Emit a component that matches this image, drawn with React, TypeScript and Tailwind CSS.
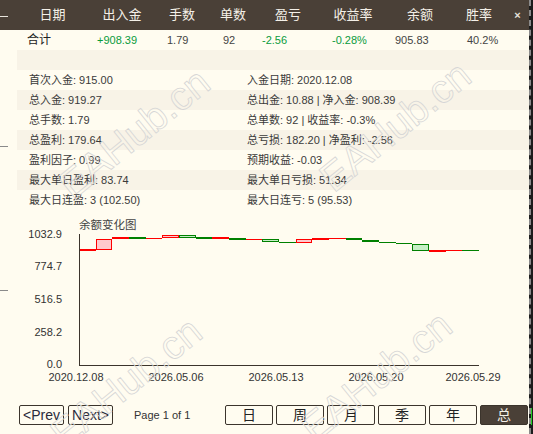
import React from 'react';

type Kind = 'upBox' | 'downBox' | 'upThick' | 'downThick' | 'upThin' | 'downThin';

interface Candle {
  k: Kind;
  y1: number;
  y2?: number;
}

// page-pixel y values, read off the balance line
const candles: Candle[] = [
  { k: 'upThick', y1: 249.7 },
  { k: 'upBox', y1: 239.3, y2: 250 },
  { k: 'upThick', y1: 237.7 },
  { k: 'downThick', y1: 237.7 },
  { k: 'upThin', y1: 238.3 },
  { k: 'upBox', y1: 235, y2: 238 },
  { k: 'downBox', y1: 235, y2: 238 },
  { k: 'downThick', y1: 237.7 },
  { k: 'upThick', y1: 237.7 },
  { k: 'downThick', y1: 239 },
  { k: 'upThin', y1: 239.3 },
  { k: 'downBox', y1: 239.3, y2: 242 },
  { k: 'downThin', y1: 242.3 },
  { k: 'upBox', y1: 239.3, y2: 243 },
  { k: 'upThick', y1: 239 },
  { k: 'upThin', y1: 238.3 },
  { k: 'downThick', y1: 239 },
  { k: 'downThick', y1: 241 },
  { k: 'downThin', y1: 242.3 },
  { k: 'downThin', y1: 243.3 },
  { k: 'downBox', y1: 244, y2: 250.5 },
  { k: 'upThick', y1: 251 },
  { k: 'upThin', y1: 250.3 },
  { k: 'downThin', y1: 250.3 },
];

const headers = ['日期', '出入金', '手数', '单数', '盈亏', '收益率', '余额', '胜率'];
const colW = ['w-[71px]', 'w-[68px]', 'w-[52px]', 'w-[50px]', 'w-[60px]', 'w-[70px]', 'w-[64px]', 'w-[54px]'];

const statRows: [string, string][] = [
  ['', ''],
  ['首次入金: 915.00', '入金日期: 2020.12.08'],
  ['总入金: 919.27', '总出金: 10.88 | 净入金: 908.39'],
  ['总手数: 1.79', '总单数: 92 | 收益率: -0.3%'],
  ['总盈利: 179.64', '总亏损: 182.20 | 净盈利: -2.56'],
  ['盈利因子: 0.99', '预期收益: -0.03'],
  ['最大单日盈利: 83.74', '最大单日亏损: 51.34'],
  ['最大日连盈: 3 (102.50)', '最大日连亏: 5 (95.53)'],
];

const yLabels = [
  { t: '1032.9', y: 238 },
  { t: '774.7', y: 270 },
  { t: '516.5', y: 303 },
  { t: '258.2', y: 336 },
  { t: '0.0', y: 368 },
];

const xLabels = [
  { t: '2020.12.08', x: 76 },
  { t: '2026.05.06', x: 176 },
  { t: '2026.05.13', x: 276 },
  { t: '2026.05.20', x: 376 },
  { t: '2026.05.29', x: 473 },
];

const periods = ['日', '周', '月', '季', '年', '总'];

const BalanceChart: React.FC = () => {
  const x0 = 79;
  const cw = 400 / 24;
  return (
    <svg width="529" height="185" viewBox="0 210 529 185" className="block shrink-0">
      <text x="79" y="229" fontSize="11.5" fill="#444">余额变化图</text>
      {yLabels.map(l => (
        <text key={l.t} x="62" y={l.y} fontSize="11" fill="#333" textAnchor="end">{l.t}</text>
      ))}
      {xLabels.map(l => (
        <text key={l.t} x={l.x} y="381" fontSize="11" fill="#333" textAnchor="middle">{l.t}</text>
      ))}
      {candles.map((c, i) => {
        const xa = Math.round(x0 + i * cw);
        const xb = Math.round(x0 + (i + 1) * cw);
        const up = c.k.startsWith('up');
        const col = up ? '#ff0000' : '#008000';
        if (c.k === 'upBox' || c.k === 'downBox') {
          const top = Math.round(c.y1);
          const bot = Math.round(c.y2 ?? c.y1);
          return (
            <rect key={i} x={xa + 0.5} y={top + 0.5} width={xb - xa - 1} height={bot - top - 1}
              fill={up ? '#ffc9cc' : '#c6efc6'} stroke={col} strokeWidth="1" />
          );
        }
        if (c.k === 'upThick' || c.k === 'downThick') {
          return <rect key={i} x={xa} y={Math.round(c.y1) - 1} width={xb - xa} height="2" fill={col} />;
        }
        return <rect key={i} x={xa} y={Math.round(c.y1)} width={xb - xa} height="1" fill={col} />;
      })}
      <line x1="79.5" y1="234" x2="79.5" y2="365.5" stroke="#3b342c" strokeWidth="1" />
      <line x1="79" y1="365.5" x2="479" y2="365.5" stroke="#3b342c" strokeWidth="1" />
    </svg>
  );
};

const Watermark: React.FC<{ pos: string }> = ({ pos }) => (
  <span className={`pointer-events-none absolute ${pos} -translate-x-1/2 -translate-y-1/2 rotate-[-39deg] whitespace-nowrap text-[40px] leading-none text-transparent [-webkit-text-stroke:0.8px_#d6d6d6]`}>
    EAHub.cn
  </span>
);

const App: React.FC = () => {
  return (
    <div className="relative flex h-[434px] w-[533px] overflow-hidden bg-[#fffcf0] font-['Liberation_Sans','Noto_Sans_CJK_SC',sans-serif] text-[#333]">
      <div className="flex w-[529px] flex-col">
        {/* header */}
        <div className="flex h-[30px] shrink-0 items-center bg-[#4a4037] pl-[17px] text-[13px] text-[#f4f0e8]">
          {headers.map((h, i) => (
            <div key={h} className={`${colW[i]} text-center`}>{h}</div>
          ))}
          <div className="flex-1 text-center text-[11px] font-bold text-[#e8e4dc]">×</div>
        </div>

        {/* totals */}
        <div className="flex h-[20px] shrink-0 items-center pl-[17px] text-[11px]">
          <div className="w-[71px] pl-[10px] text-[12px] text-[#222]">合计</div>
          <div className="w-[68px] pl-[9px] text-[#0a9b3c]">+908.39</div>
          <div className="w-[52px] pl-[11px] text-[#444]">1.79</div>
          <div className="w-[50px] pl-[15px] text-[#444]">92</div>
          <div className="w-[60px] pl-[4px] text-[#0a9b3c]">-2.56</div>
          <div className="w-[70px] pl-[14px] text-[#0a9b3c]">-0.28%</div>
          <div className="w-[64px] pl-[7px] text-[#444]">905.83</div>
          <div className="w-[54px] pl-[15px] text-[#444]">40.2%</div>
        </div>

        {/* stats */}
        <div className="ml-[17px] flex shrink-0 flex-col text-[11px] text-[#3a3a3a]">
          {statRows.map(([l, r], i) => (
            <div key={i} className={`flex h-[20px] items-center pl-[12px] ${i % 2 === 0 ? 'bg-[#f8f3e7]' : ''}`}>
              <div className="w-[218px]">{l}</div>
              <div>{r}</div>
            </div>
          ))}
        </div>

        {/* chart */}
        <BalanceChart />

        {/* pager */}
        <div className="flex items-center pl-[19px] pt-[10px]">
          <button className="flex h-[20px] w-[45px] items-center justify-center rounded-[2px] border border-[#3b342c] text-[14px] text-[#2a2a3a]">&lt;Prev</button>
          <button className="ml-[4px] flex h-[20px] w-[45px] items-center justify-center rounded-[2px] border border-[#3b342c] text-[14px] text-[#2a2a3a]">Next&gt;</button>
          <span className="ml-[21px] w-[91px] whitespace-nowrap text-[11px] text-[#333]">Page 1 of 1</span>
          <div className="flex gap-[3px]">
            {periods.map(p => (
              <button
                key={p}
                className={`flex h-[20px] w-[48px] items-center justify-center rounded-[2px] border border-[#3b342c] text-[14px] leading-none ${p === '总' ? 'bg-[#4a4037] text-[#f4f0e8]' : 'text-[#222]'}`}
              >
                {p}
              </button>
            ))}
          </div>
        </div>
      </div>

      {/* window edge */}
      <div className="relative w-[4px] border-l-2 border-dashed border-[#8a8a8a] bg-[#1c1c1c]">
        <div className="absolute left-0 top-[408px] h-[17px] w-[1px] bg-[#22cc22]" />
      </div>

      {/* bits of the window behind */}
      <div className="absolute left-0 top-[16px] h-px w-[8px] bg-[#e8e4dc]" />
      <div className="absolute left-0 top-[146px] h-px w-[8px] bg-[#8a8a8a]" />
      <div className="absolute left-0 top-[290px] h-px w-[8px] bg-[#8a8a8a]" />

      <Watermark pos="left-[134px] top-[133px]" />
      <Watermark pos="left-[395px] top-[126px]" />
      <Watermark pos="left-[126px] top-[382px]" />
      <Watermark pos="left-[376px] top-[376px]" />
    </div>
  );
};

export default App;
